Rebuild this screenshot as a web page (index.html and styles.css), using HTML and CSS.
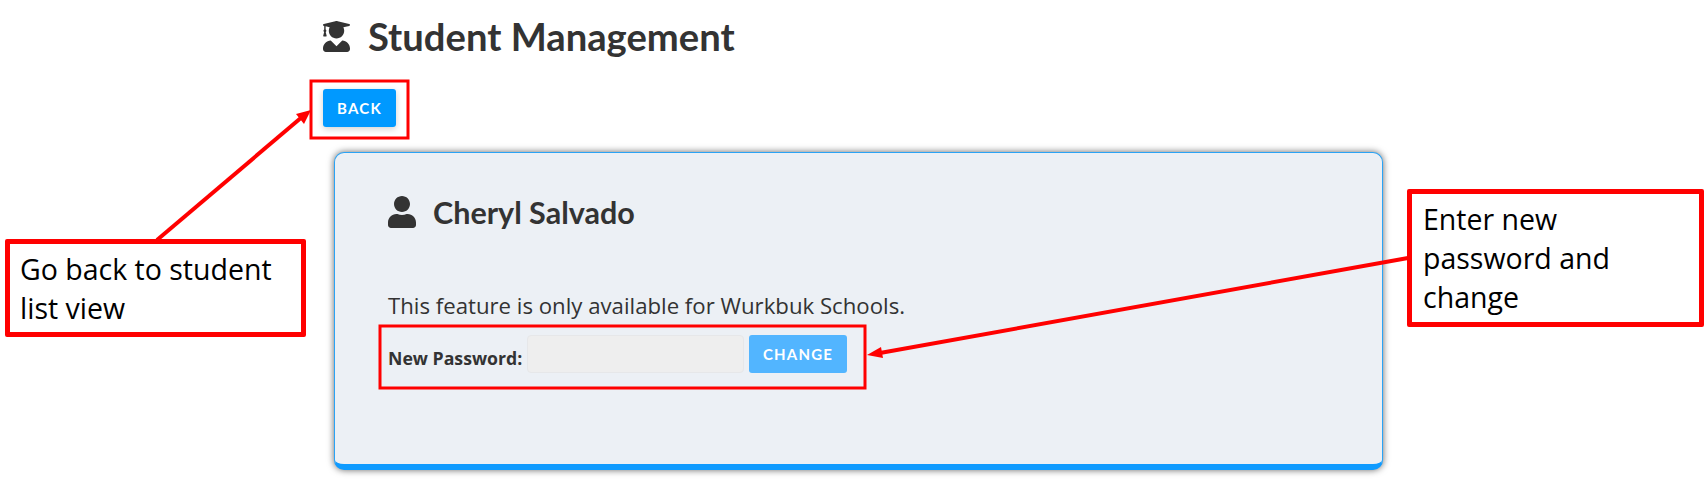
FILE: index.html
```html
<!DOCTYPE html>
<html lang="en">
<head>
    <meta charset="UTF-8">
    <title>Student Management</title>
    <link rel="stylesheet" href="styles.css">
</head>
<body>
    <div class="page">
        <h1 class="page-title">
            <svg class="title-icon" viewBox="0 0 448 512"><path d="M319.4 320.6L224 416l-95.4-95.4C57.1 323.7 0 382.2 0 454.4v9.6c0 26.5 21.5 48 48 48h352c26.5 0 48-21.5 48-48v-9.6c0-72.2-57.1-130.7-128.6-133.8zM13.6 79.8l6.4 1.5v58.4c-7 4.2-12 11.5-12 20.3 0 8.4 4.6 15.4 11.1 19.7L3.5 242c-1.7 6.9 2.1 14 7.6 14h41.8c5.5 0 9.3-7.1 7.6-14l-15.6-62.3C51.4 175.4 56 168.4 56 160c0-8.8-5-16.1-12-20.3V87.1l66 15.9c-8.6 17.2-14 36.4-14 57 0 70.7 57.3 128 128 128s128-57.3 128-128c0-20.6-5.3-39.8-14-57l96.3-23.2c18.2-4.4 18.2-27.1 0-31.5l-190.4-46c-13-3.1-26.7-3.1-39.7 0L13.6 48.2c-18.1 4.4-18.1 27.2 0 31.6z"/></svg>
            <span>Student Management</span>
        </h1>
        <button class="btn back-btn">BACK</button>
        <div class="card">
            <h2 class="card-title">
                <svg class="name-icon" viewBox="0 0 448 512"><path d="M224 256c70.7 0 128-57.3 128-128S294.7 0 224 0 96 57.3 96 128s57.3 128 128 128zm89.6 32h-16.7c-22.2 10.2-46.9 16-72.9 16s-50.6-5.8-72.9-16h-16.7C60.2 288 0 348.2 0 422.4V464c0 26.5 21.5 48 48 48h352c26.5 0 48-21.5 48-48v-41.6c0-74.2-60.2-134.4-134.4-134.4z"/></svg>
                <span>Cheryl Salvado</span>
            </h2>
            <p class="notice">This feature is only available for Wurkbuk Schools.</p>
            <div class="password-row">
                <label class="password-label">New Password:</label>
                <input class="password-input" type="password" disabled>
                <button class="btn change-btn">CHANGE</button>
            </div>
        </div>
    </div>

    <!-- annotations drawn on top of the screenshot -->
    <svg class="marks" width="1704" height="484" viewBox="0 0 1704 484">
        <rect x="311" y="81" width="97" height="57" class="mark-box"/>
        <rect x="380" y="326" width="485" height="62" class="mark-box"/>
        <line x1="157" y1="240" x2="302" y2="117" class="mark-line"/>
        <polygon points="311,110 304,124 296,114" class="mark-head"/>
        <line x1="1408" y1="258" x2="880" y2="353" class="mark-line"/>
        <polygon points="867,355 881,347 883,358" class="mark-head"/>
    </svg>
    <div class="callout callout-left">Go back to student list view</div>
    <div class="callout callout-right">Enter new password and change</div>
</body>
</html>
```

FILE: styles.css
```css
html, body { margin: 0; background: #fff; }
body { width: 1704px; height: 484px; overflow: hidden; position: relative; color: #333; }

.page { padding: 0 321px 0 323px; }

.page-title {
    display: flex;
    align-items: center;
    gap: 18px;
    margin: 0;
    height: 72px;
    font-family: Lato, sans-serif;
    font-size: 38.2px;
    font-weight: 700;
    line-height: 44px;
}
.title-icon { width: 27px; height: 31px; fill: #333; }

.btn {
    border: none;
    border-radius: 3px;
    color: #fff;
    font-family: Lato, sans-serif;
    font-size: 15px;
    font-weight: 700;
    letter-spacing: 1.2px;
    padding: 0;
    height: 38px;
}
.back-btn {
    display: block;
    width: 73px;
    margin-top: 17px;
    background: #0099ff;
    box-shadow: 0 2px 6px rgba(0, 0, 0, 0.18);
}

.card {
    box-sizing: border-box;
    height: 318px;
    margin: 25px 0 0 11px;
    padding: 42px 0 0 53px;
    background: #ecf0f5;
    border: 1px solid #2aa3f5;
    border-bottom: 6px solid #0f9bff;
    border-radius: 10px;
    box-shadow: 0 0 7px rgba(0, 0, 0, 0.6);
}
.card-title {
    display: flex;
    align-items: center;
    gap: 17px;
    margin: 0;
    font-family: Lato, sans-serif;
    font-size: 30.5px;
    font-weight: 700;
    line-height: 34px;
}
.name-icon { width: 28px; height: 32px; fill: #333; }

.notice {
    margin: 63px 0 0;
    font-family: "Open Sans", sans-serif;
    font-size: 22.2px;
    line-height: 28px;
    color: #333;
}

.password-row { display: flex; align-items: center; margin-top: 15px; }
.password-label {
    width: 139px;
    font-family: "Open Sans", sans-serif;
    font-size: 17.7px;
    font-weight: 700;
    padding-top: 8px;
    white-space: nowrap;
}
.password-input {
    box-sizing: border-box;
    width: 217px;
    height: 38px;
    margin: 0;
    background: #eeeeee;
    border: 1px solid #e6e7e9;
    border-radius: 4px;
}
.change-btn { width: 98px; margin-left: 5px; background: #52b5ff; }

.marks { position: absolute; left: 0; top: 0; }
.mark-box { fill: none; stroke: #ff0000; stroke-width: 3; }
.mark-line { stroke: #ff0000; stroke-width: 4; }
.mark-head { fill: #ff0000; }

.callout {
    position: absolute;
    box-sizing: border-box;
    background: #fff;
    border: 5px solid #ff0000;
    border-radius: 2px;
    color: #000;
    font-family: "Open Sans", sans-serif;
    font-size: 28.5px;
    line-height: 39px;
}
.callout-left { left: 5px; top: 239px; width: 301px; height: 98px; padding: 6px 0 0 10px; }
.callout-right { left: 1407px; top: 189px; width: 297px; height: 138px; padding: 6px 60px 0 11px; }
```
